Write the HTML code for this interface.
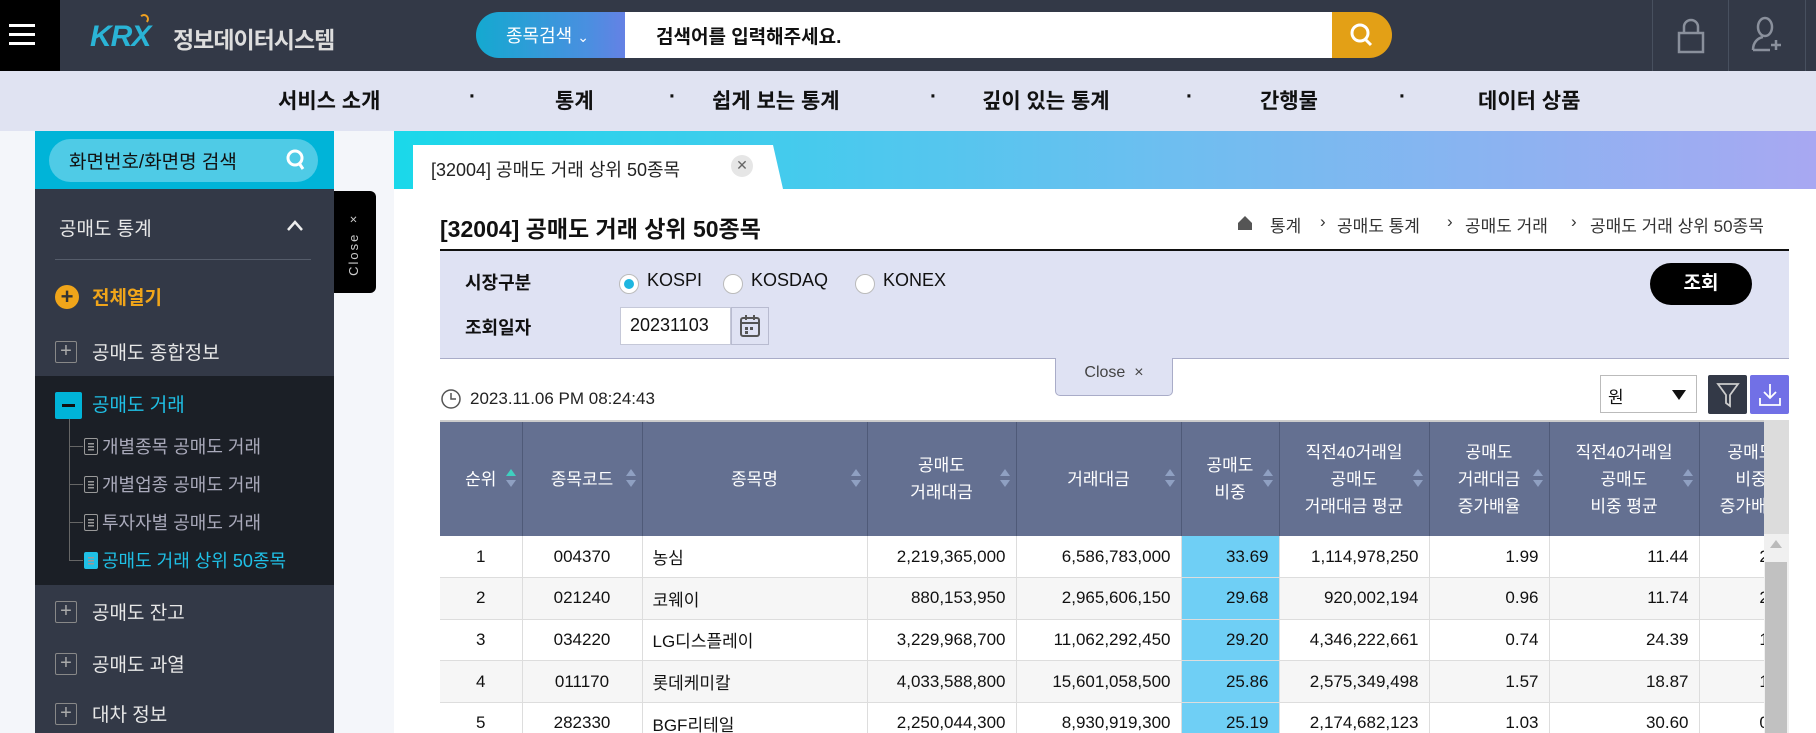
<!DOCTYPE html>
<html><head><meta charset="utf-8">
<style>
*{box-sizing:border-box;margin:0;padding:0}
body{width:1816px;height:733px;overflow:hidden;position:relative;background:#fff;font-family:"Liberation Sans","Noto Sans CJK KR",sans-serif;color:#111}
.a{position:absolute}
.hdr{left:0;top:0;width:1816px;height:71px;background:#333947}
.nav{left:0;top:71px;width:1816px;height:60px;background:#e0e3f2;font-size:21px;font-weight:bold;color:#111}
.nav span{position:absolute;top:14px;white-space:nowrap}
.side{left:35px;top:131px;width:299px;height:602px;background:#333947}
.sidetxt{color:#e8e8e8;font-size:19px;white-space:nowrap}
.pbox{width:22px;height:22px;border:1.5px solid #888;border-radius:2px;color:#aaa;font-size:20px;line-height:18px;text-align:center}
.sub{color:#aab;font-size:18px;white-space:nowrap}
.doc{display:inline-block;width:14px;height:17px;border:1.5px solid #999;border-radius:2px;vertical-align:-2px;margin-right:4px;background:linear-gradient(#999,#999) 3px 4px/6px 1.5px no-repeat,linear-gradient(#999,#999) 3px 7px/6px 1.5px no-repeat,linear-gradient(#999,#999) 3px 10px/6px 1.5px no-repeat}
table{border-collapse:collapse;table-layout:fixed}
th{background:#647091;color:#fff;font-weight:normal;font-size:17px;line-height:27px;border-right:1px solid #4f5a78;height:114px;position:relative;text-align:center}
td{font-size:17px;height:41.6px;border-right:1px solid #ddd;border-bottom:1px solid #ddd;padding:0 10px;white-space:nowrap}
tr.o td{background:#f6f6f6}
td.r{text-align:right}td.c{text-align:center}
td.h{background:#6fcff5!important}
.s{position:absolute;right:6px;top:50%;margin-top:-10px;width:10px;height:20px}
.s:before{content:"";position:absolute;left:0;top:0;border:5px solid transparent;border-bottom:7px solid #8fa0c2;border-top:0}
.s:after{content:"";position:absolute;left:0;top:11px;border:5px solid transparent;border-top:7px solid #8fa0c2;border-bottom:0}
.s.up:before{border-bottom-color:#3fd0c0}
.bc{top:212px;font-size:17px;color:#333;white-space:nowrap}
</style></head><body>
<!-- header -->
<div class="a hdr"></div>
<div class="a" style="left:0;top:0;width:60px;height:71px;background:#000"></div>
<div class="a" style="left:9px;top:24px;width:26px;height:3px;background:#fff"></div>
<div class="a" style="left:9px;top:33px;width:26px;height:3px;background:#fff"></div>
<div class="a" style="left:9px;top:42px;width:26px;height:3px;background:#fff"></div>
<div class="a" style="left:90px;top:20px;font-size:30px;font-weight:bold;color:#2ab4d6;font-style:italic;letter-spacing:-1px">KRX</div>
<div class="a" style="left:139px;top:14px;width:10px;height:10px;border:2px solid #f0a020;border-radius:50%;border-left-color:transparent;border-bottom-color:transparent"></div>
<div class="a" style="left:173px;top:21px;font-size:23px;font-weight:bold;color:#ddd;letter-spacing:-1px">정보데이터시스템</div>
<div class="a" style="left:476px;top:12px;width:160px;height:46px;border-radius:23px 0 0 23px;background:linear-gradient(90deg,#14a9d0,#4a8fe0 70%,#6d7de6)"></div>
<div class="a" style="left:506px;top:22px;font-size:18px;color:#fff">종목검색 <span style="font-size:14px">&#8964;</span></div>
<div class="a" style="left:625px;top:12px;width:707px;height:46px;background:#fff"></div>
<div class="a" style="left:656px;top:22px;font-size:19px;font-weight:bold;color:#111">검색어를 입력해주세요.</div>
<div class="a" style="left:1332px;top:12px;width:60px;height:46px;border-radius:0 23px 23px 0;background:#e3a016"></div>
<svg class="a" style="left:1348px;top:21px" width="28" height="28" viewBox="0 0 28 28"><circle cx="12" cy="12" r="8" fill="none" stroke="#fff" stroke-width="3"/><path d="M17 18l6 6" stroke="#fff" stroke-width="3"/></svg>
<div class="a" style="left:1652px;top:0;width:1px;height:71px;background:#48505f"></div>
<div class="a" style="left:1728px;top:0;width:1px;height:71px;background:#48505f"></div>
<div class="a" style="left:1805px;top:0;width:1px;height:71px;background:#48505f"></div>
<svg class="a" style="left:1676px;top:18px" width="30" height="36" viewBox="0 0 30 36"><rect x="3" y="15" width="24" height="19" fill="none" stroke="#8a909c" stroke-width="2.5"/><path d="M8 15V9a7 7 0 0114 0v6" fill="none" stroke="#8a909c" stroke-width="2.5"/></svg>
<svg class="a" style="left:1750px;top:16px" width="34" height="38" viewBox="0 0 34 38"><ellipse cx="15" cy="11" rx="7" ry="9" fill="none" stroke="#8a909c" stroke-width="2.5"/><path d="M3 34c0-8 5-12 10-13M3 34h17" fill="none" stroke="#8a909c" stroke-width="2.5"/><path d="M26 24v10M21 29h10" stroke="#8a909c" stroke-width="2.5"/></svg>
<!-- nav -->
<div class="a nav">
<span style="left:278px">서비스 소개</span><span style="left:469px">·</span>
<span style="left:555px">통계</span><span style="left:669px">·</span>
<span style="left:712px">쉽게 보는 통계</span><span style="left:930px">·</span>
<span style="left:982px">깊이 있는 통계</span><span style="left:1186px">·</span>
<span style="left:1260px">간행물</span><span style="left:1399px">·</span>
<span style="left:1478px">데이터 상품</span>
</div>
<!-- left bg -->
<div class="a" style="left:0;top:131px;width:394px;height:602px;background:#f4f6fa"></div>
<div class="a side"></div>
<div class="a" style="left:35px;top:131px;width:299px;height:58px;background:#00b4d8"></div>
<div class="a" style="left:49px;top:139px;width:269px;height:43px;border-radius:22px;background:#4fcbe6"></div>
<div class="a" style="left:69px;top:147px;font-size:19px;color:#111">화면번호/화면명 검색</div>
<svg class="a" style="left:285px;top:148px" width="22" height="24" viewBox="0 0 22 24"><circle cx="10" cy="10" r="7" fill="none" stroke="#fff" stroke-width="3"/><path d="M14 15l4 6" stroke="#fff" stroke-width="3"/></svg>
<div class="a sidetxt" style="left:59px;top:214px">공매도 통계</div>
<svg class="a" style="left:286px;top:218px" width="18" height="14"><path d="M2 12l7-8 7 8" fill="none" stroke="#eee" stroke-width="2.5"/></svg>
<div class="a" style="left:55px;top:259px;width:256px;height:1px;background:#555c6a"></div>
<div class="a" style="left:55px;top:285px;width:24px;height:24px;border-radius:50%;background:#f0a51a;color:#333;font-size:22px;line-height:23px;text-align:center;font-weight:bold">+</div>
<div class="a" style="left:92px;top:283px;font-size:19px;font-weight:bold;color:#f0a51a">전체열기</div>
<div class="a pbox" style="left:55px;top:341px">+</div>
<div class="a sidetxt" style="left:92px;top:338px">공매도 종합정보</div>
<div class="a" style="left:35px;top:376px;width:299px;height:209px;background:#1b1f26"></div>
<div class="a" style="left:55px;top:392px;width:27px;height:27px;background:#00b4d8;border-radius:2px"></div>
<div class="a" style="left:62px;top:404px;width:13px;height:3px;background:#111"></div>
<div class="a" style="left:92px;top:390px;font-size:19px;color:#1fc0e6">공매도 거래</div>
<div class="a" style="left:69px;top:419px;width:1px;height:141px;background:#666"></div>
<div class="a" style="left:69px;top:446px;width:14px;height:1px;background:#666"></div>
<div class="a" style="left:69px;top:484px;width:14px;height:1px;background:#666"></div>
<div class="a" style="left:69px;top:522px;width:14px;height:1px;background:#666"></div>
<div class="a" style="left:69px;top:560px;width:14px;height:1px;background:#666"></div>
<div class="a sub" style="left:84px;top:433px"><span class="doc"></span>개별종목 공매도 거래</div>
<div class="a sub" style="left:84px;top:471px"><span class="doc"></span>개별업종 공매도 거래</div>
<div class="a sub" style="left:84px;top:509px"><span class="doc"></span>투자자별 공매도 거래</div>
<div class="a sub" style="left:84px;top:547px;color:#1fc0e6"><span class="doc" style="border-color:#1fc0e6;background-color:#1fc0e6"></span>공매도 거래 상위 50종목</div>
<div class="a pbox" style="left:55px;top:601px">+</div>
<div class="a sidetxt" style="left:92px;top:598px">공매도 잔고</div>
<div class="a pbox" style="left:55px;top:653px">+</div>
<div class="a sidetxt" style="left:92px;top:650px">공매도 과열</div>
<div class="a pbox" style="left:55px;top:703px">+</div>
<div class="a sidetxt" style="left:92px;top:700px">대차 정보</div>
<div class="a" style="left:334px;top:191px;width:42px;height:102px;background:#000;border-radius:0 6px 6px 0"></div>
<div class="a" style="left:346px;top:210px;color:#ccc;font-size:13px;writing-mode:vertical-rl;transform:rotate(180deg);letter-spacing:2px">Close ×</div>
<!-- gradient band -->
<div class="a" style="left:394px;top:131px;width:1422px;height:58px;background:linear-gradient(90deg,#1ad8ea,#6ebef0 55%,#a8a8f2)"></div>
<div class="a" style="left:413px;top:145px;width:370px;height:44px;background:#fff;clip-path:polygon(0 0,360px 0,370px 44px,0 44px)"></div>
<div class="a" style="left:431px;top:156px;font-size:18px;color:#222">[32004] 공매도 거래 상위 50종목</div>
<div class="a" style="left:731px;top:155px;width:22px;height:22px;border-radius:50%;background:#e6e6e6;color:#666;font-size:14px;text-align:center;line-height:21px">✕</div>
<!-- title -->
<div class="a" style="left:440px;top:210px;font-size:23px;font-weight:bold;color:#111">[32004] 공매도 거래 상위 50종목</div>
<svg class="a" style="left:1237px;top:215px" width="16" height="16"><path d="M1 8L8 1l7 7v7H1z" fill="#555"/></svg>
<div class="a bc" style="left:1270px">통계</div>
<div class="a bc" style="left:1320px">›</div>
<div class="a bc" style="left:1337px">공매도 통계</div>
<div class="a bc" style="left:1447px">›</div>
<div class="a bc" style="left:1465px">공매도 거래</div>
<div class="a bc" style="left:1571px">›</div>
<div class="a bc" style="left:1590px">공매도 거래 상위 50종목</div>
<div class="a" style="left:440px;top:249px;width:1349px;height:2px;background:#111"></div>
<div class="a" style="left:440px;top:251px;width:1349px;height:108px;background:#dfe2f3;border-bottom:1px solid #a9acc8"></div>
<div class="a" style="left:465px;top:269px;font-size:18px;font-weight:bold">시장구분</div>
<div class="a" style="left:465px;top:314px;font-size:18px;font-weight:bold">조회일자</div>
<div class="a" style="left:619px;top:274px;width:20px;height:20px;border-radius:50%;border:1px solid #bbb;background:#fff"></div>
<div class="a" style="left:624px;top:279px;width:10px;height:10px;border-radius:50%;background:#1eb6e0"></div>
<div class="a" style="left:647px;top:270px;font-size:18px">KOSPI</div>
<div class="a" style="left:723px;top:274px;width:20px;height:20px;border-radius:50%;border:1px solid #bbb;background:#fff"></div>
<div class="a" style="left:751px;top:270px;font-size:18px">KOSDAQ</div>
<div class="a" style="left:855px;top:274px;width:20px;height:20px;border-radius:50%;border:1px solid #bbb;background:#fff"></div>
<div class="a" style="left:883px;top:270px;font-size:18px">KONEX</div>
<div class="a" style="left:620px;top:307px;width:111px;height:38px;background:#fff;border:1px solid #c5c8d8"></div>
<div class="a" style="left:630px;top:315px;font-size:18px">20231103</div>
<div class="a" style="left:731px;top:307px;width:38px;height:38px;background:#dfe2f3;border:1px solid #b8bbd0"></div>
<svg class="a" style="left:739px;top:314px" width="22" height="24"><rect x="2" y="4" width="18" height="18" rx="2" fill="none" stroke="#555" stroke-width="2"/><path d="M2 9h18M7 1v5M15 1v5" stroke="#555" stroke-width="2"/><path d="M6 13h3v3H6zM11 13h3v3h-3zM6 17h3v3H6z" fill="#555"/></svg>
<div class="a" style="left:1650px;top:263px;width:102px;height:42px;border-radius:21px;background:#000;color:#fff;font-size:19px;font-weight:bold;text-align:center;line-height:42px">조회</div>
<div class="a" style="left:1055px;top:358px;width:118px;height:38px;background:#dfe2f3;border:1px solid #a9acc8;border-top:none;border-radius:0 0 5px 5px;text-align:center;font-size:16px;color:#444;line-height:30px">Close &nbsp;×</div>
<!-- timestamp -->
<svg class="a" style="left:440px;top:388px" width="22" height="22"><circle cx="11" cy="11" r="9" fill="none" stroke="#555" stroke-width="1.5"/><path d="M11 5v6h5" fill="none" stroke="#555" stroke-width="1.5"/></svg>
<div class="a" style="left:470px;top:389px;font-size:17px;color:#222">2023.11.06 PM 08:24:43</div>
<div class="a" style="left:1600px;top:375px;width:97px;height:38px;border:1px solid #bbb;background:#fff"></div>
<div class="a" style="left:1608px;top:383px;font-size:17px">원</div>
<div class="a" style="left:1672px;top:390px;border:7px solid transparent;border-top:10px solid #111;border-bottom:0"></div>
<div class="a" style="left:1708px;top:375px;width:39px;height:39px;background:#333947;border-radius:2px"></div>
<svg class="a" style="left:1716px;top:382px" width="24" height="26"><path d="M2 2h20l-8 11v11l-4-3v-8z" fill="none" stroke="#ccc" stroke-width="1.8"/></svg>
<div class="a" style="left:1750px;top:375px;width:39px;height:39px;background:#7170e6;border-radius:2px"></div>
<svg class="a" style="left:1758px;top:382px" width="24" height="26"><path d="M12 2v14M6 10l6 6 6-6M2 16v7h20v-7" fill="none" stroke="#fff" stroke-width="1.8"/></svg>
<!-- table -->
<div class="a" style="left:440px;top:420px;width:1324px;height:313px;overflow:hidden;border-top:2px solid #ccc">
<table style="width:1363px">
<colgroup><col style="width:82px"><col style="width:120px"><col style="width:225px"><col style="width:149px"><col style="width:165px"><col style="width:98px"><col style="width:150px"><col style="width:120px"><col style="width:150px"><col style="width:104px"></colgroup>
<tr>
<th>순위<i class="s up"></i></th>
<th>종목코드<i class="s"></i></th>
<th>종목명<i class="s"></i></th>
<th>공매도<br>거래대금<i class="s"></i></th>
<th>거래대금<i class="s"></i></th>
<th>공매도<br>비중<i class="s"></i></th>
<th>직전40거래일<br>공매도<br>거래대금 평균<i class="s"></i></th>
<th>공매도<br>거래대금<br>증가배율<i class="s"></i></th>
<th>직전40거래일<br>공매도<br>비중 평균<i class="s"></i></th>
<th>공매도<br>비중<br>증가배율</th>
</tr>
<tr><td class="c">1</td><td class="c">004370</td><td>농심</td><td class="r">2,219,365,000</td><td class="r">6,586,783,000</td><td class="r h">33.69</td><td class="r">1,114,978,250</td><td class="r">1.99</td><td class="r">11.44</td><td class="r">2.94</td></tr>
<tr class="o"><td class="c">2</td><td class="c">021240</td><td>코웨이</td><td class="r">880,153,950</td><td class="r">2,965,606,150</td><td class="r h">29.68</td><td class="r">920,002,194</td><td class="r">0.96</td><td class="r">11.74</td><td class="r">2.53</td></tr>
<tr><td class="c">3</td><td class="c">034220</td><td>LG디스플레이</td><td class="r">3,229,968,700</td><td class="r">11,062,292,450</td><td class="r h">29.20</td><td class="r">4,346,222,661</td><td class="r">0.74</td><td class="r">24.39</td><td class="r">1.20</td></tr>
<tr class="o"><td class="c">4</td><td class="c">011170</td><td>롯데케미칼</td><td class="r">4,033,588,800</td><td class="r">15,601,058,500</td><td class="r h">25.86</td><td class="r">2,575,349,498</td><td class="r">1.57</td><td class="r">18.87</td><td class="r">1.37</td></tr>
<tr><td class="c">5</td><td class="c">282330</td><td>BGF리테일</td><td class="r">2,250,044,300</td><td class="r">8,930,919,300</td><td class="r h">25.19</td><td class="r">2,174,682,123</td><td class="r">1.03</td><td class="r">30.60</td><td class="r">0.82</td></tr>
</table>
</div>
<div class="a" style="left:1764px;top:420px;width:25px;height:313px;background:#f0f0f0"></div>
<div class="a" style="left:1764px;top:420px;width:25px;height:114px;background:#dcdcdc"></div>
<div class="a" style="left:1770px;top:540px;border:6px solid transparent;border-bottom:8px solid #bbb;border-top:0"></div>
<div class="a" style="left:1765px;top:562px;width:22px;height:171px;background:#c1c1c1"></div>
</body></html>
